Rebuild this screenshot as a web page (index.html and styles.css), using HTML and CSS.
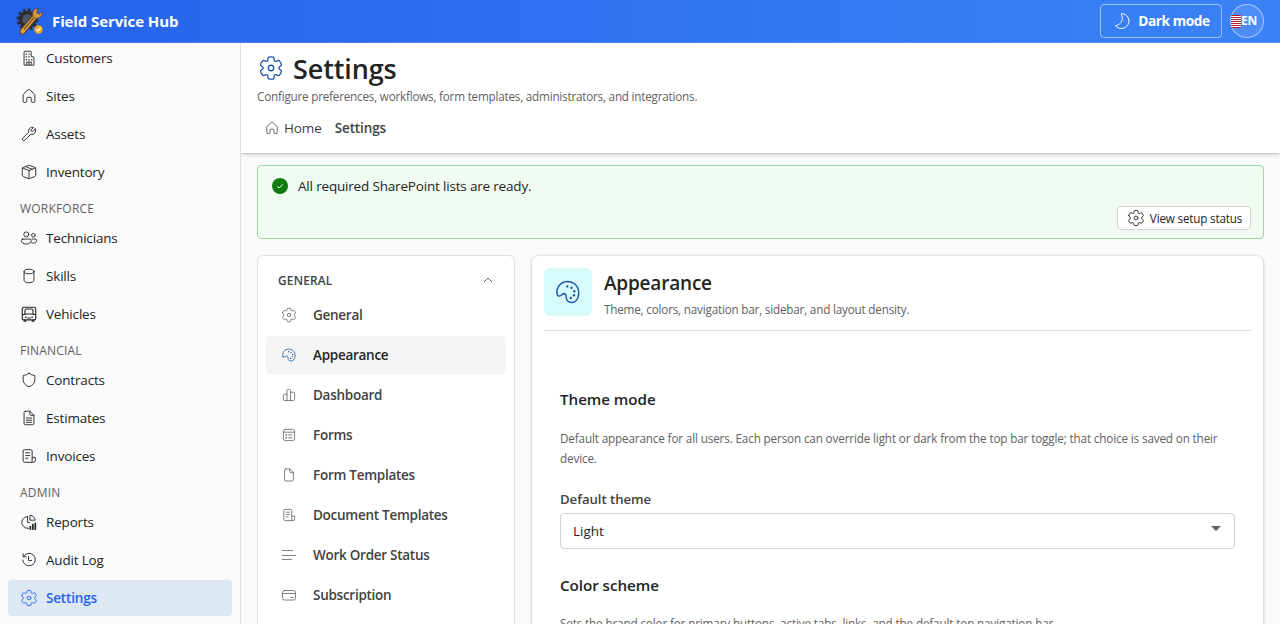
FILE: index.html
```html
<!DOCTYPE html>
<html lang="en">
<head>
<meta charset="utf-8">
<title>Field Service Hub</title>
<link rel="stylesheet" href="styles.css">
</head>
<body>
<svg class="defs" aria-hidden="true">
  <symbol id="gear" viewBox="0 0 20 20"><path d="M1.91 7.38A8.5 8.5 0 0 1 3.69 4.3a.5.5 0 0 1 .54-.13l1.92.68a1 1 0 0 0 1.32-.76l.36-2a.5.5 0 0 1 .4-.4 8.53 8.53 0 0 1 3.55 0c.2.04.35.2.38.4l.37 2a1 1 0 0 0 1.32.76l1.92-.68a.5.5 0 0 1 .54.13 8.5 8.5 0 0 1 1.78 3.08c.06.2 0 .4-.15.54l-1.56 1.32a1 1 0 0 0 0 1.52l1.56 1.32a.5.5 0 0 1 .15.54 8.5 8.5 0 0 1-1.78 3.08.5.5 0 0 1-.54.13l-1.92-.68a1 1 0 0 0-1.32.76l-.37 2a.5.5 0 0 1-.38.4 8.53 8.53 0 0 1-3.56 0 .5.5 0 0 1-.39-.4l-.36-2a1 1 0 0 0-1.32-.76l-1.92.68a.5.5 0 0 1-.54-.13 8.5 8.5 0 0 1-1.78-3.08.5.5 0 0 1 .15-.54l1.56-1.32a1 1 0 0 0 0-1.52L2.06 7.92a.5.5 0 0 1-.15-.54Z"/><circle cx="10" cy="10" r="2.1"/></symbol>
  <symbol id="building" viewBox="0 0 20 20"><path d="M4.5 17.5v-14a1 1 0 0 1 1-1h6a1 1 0 0 1 1 1v5h2a1 1 0 0 1 1 1v8zM7.5 17.5v-3h5v3M10 14.5v3"/><path class="solid" d="M6.3 5h1.4v1.4H6.3zM9.3 5h1.4v1.4H9.3zM6.3 8h1.4v1.4H6.3zM9.3 8h1.4v1.4H9.3zM6.3 11h1.4v1.4H6.3zM9.3 11h1.4v1.4H9.3zM12.3 11h1.4v1.4h-1.4z"/></symbol>
  <symbol id="home" viewBox="0 0 20 20"><path d="M9.3 2.9a1 1 0 0 1 1.4 0l5.3 4.9c.3.3.5.7.5 1.1V16a1 1 0 0 1-1 1h-2a1 1 0 0 1-1-1v-3.500a1 1 0 0 0-1-1h-3a1 1 0 0 0-1 1V16a1 1 0 0 1-1 1h-2a1 1 0 0 1-1-1V8.900c0-.4.2-.8.5-1.100z"/></symbol>
  <symbol id="wrench" viewBox="0 0 20 20"><path d="M16.900 4.500 14.200 7.200 12.500 6.900 12.200 5.400 14.900 2.700a4 4 0 0 0-5.100 5.200L3.100 14.600a1.600 1.600 0 0 0 2.300 2.300L12 10.200a4 4 0 0 0 4.900-5.700Z"/></symbol>
  <symbol id="box" viewBox="0 0 20 20"><path d="M9.400 2.700a2 2 0 0 1 1.300 0l5.800 2.200c.6.200 1 .7 1 1.300v7.500c0 .6-.4 1.100-1 1.300l-5.800 2.300a2 2 0 0 1-1.400 0L3.500 15c-.6-.2-1-.7-1-1.300V6.200c0-.6.4-1.100 1-1.300zM2.800 5.500 10 8.400l7.200-2.900M10 8.400v9M6.200 4l7.300 2.900"/></symbol>
  <symbol id="people" viewBox="0 0 20 20"><circle cx="7" cy="6" r="2.800"/><circle cx="14.800" cy="7" r="2"/><path d="M3 11.200h8a1.500 1.500 0 0 1 1.500 1.500c0 2.300-2.200 4-5.500 4s-5.500-1.700-5.500-4A1.500 1.500 0 0 1 3 11.200ZM13.500 11.200h3.600a1.400 1.400 0 0 1 1.400 1.400c0 1.700-1.400 3.100-3.700 3.100-.7 0-1.300-.1-1.800-.3"/></symbol>
  <symbol id="drum" viewBox="0 0 20 20"><ellipse cx="10" cy="5" rx="5.500" ry="2.500"/><path d="M4.500 5v10c0 1.400 2.500 2.500 5.500 2.500s5.500-1.100 5.500-2.500V5"/></symbol>
  <symbol id="bus" viewBox="0 0 20 20"><path d="M4 16.500h12a1.500 1.500 0 0 0 1.500-1.500V4.500a2 2 0 0 0-2-2h-11a2 2 0 0 0-2 2V15A1.500 1.500 0 0 0 4 16.500ZM4.500 16.500v1.500h2v-1.500M13.500 16.500v1.500h2v-1.500M5.500 10V6A1.500 1.500 0 0 1 7 4.500h6A1.500 1.500 0 0 1 14.500 6v4zM2.500 10.500h3M14.500 10.500h3M6 13.500h1M13 13.500h1M8.500 14.500h3" stroke-width="1.250"/></symbol>
  <symbol id="shield" viewBox="0 0 20 20"><path d="M10 2.500c2 1.400 4 2.200 6.500 2.500v4.500c0 3.700-2.200 6.500-6.500 8-4.300-1.500-6.500-4.300-6.500-8V5C6 4.700 8 3.900 10 2.500Z"/></symbol>
  <symbol id="doctext" viewBox="0 0 20 20"><path d="M6 2.500h5l4.500 4.500v9A1.500 1.500 0 0 1 14 17.500H6A1.500 1.500 0 0 1 4.500 16V4A1.500 1.500 0 0 1 6 2.500ZM11 2.500V6a1 1 0 0 0 1 1h3.500M7 10h6M7 12.400h6M7 14.800h6"/></symbol>
  <symbol id="doc" viewBox="0 0 20 20"><path d="M6 2.500h5l4.500 4.500v9A1.500 1.500 0 0 1 14 17.500H6A1.500 1.500 0 0 1 4.500 16V4A1.500 1.500 0 0 1 6 2.500ZM11 2.500V6a1 1 0 0 0 1 1h3.500"/></symbol>
  <symbol id="receipt" viewBox="0 0 20 20"><path d="M13.500 11.500V4.500a1.500 1.500 0 0 0-1.500-1.500H5a1.500 1.500 0 0 0-1.500 1.500V15A2 2 0 0 0 5.500 17h9.500a2 2 0 0 0 2-2v-3.500h-3.500V15a2 2 0 0 1-.6 2M6.300 6.500h4.500M6.300 9.500h4.500M6.300 12.500h2.500"/></symbol>
  <symbol id="report" viewBox="0 0 20 20"><path d="M8.500 4A6.500 6.500 0 0 0 8.500 17M8.500 4v6.500h2M11.500 2.500c3 .3 5 2.500 5.300 5.500h-5.300zM8.500 17h.8"/><path d="M11.500 18v-3M14.300 18v-5M17 18v-6.500" stroke-width="1.900"/></symbol>
  <symbol id="history" viewBox="0 0 20 20"><path d="M3.500 3v3.500H7M3.800 6.200A7 7 0 1 1 3 10M9.500 6v4.500h3.500"/></symbol>
  <symbol id="palette" viewBox="0 0 20 20"><path d="M2.500 12.100C1 8.500 3.500 4 7.500 2.800c4.500-1.200 9.100 1.500 10 6 .8 3.900-.9 8.200-4.500 8.700-2.500.3-4.200-1.400-4.300-3.700 0-1.700-.5-2.700-1.800-2.700-1.300.1-1.500 1.400-2.600 1.700-.8.200-1.500 0-1.800-.7Z"/><g class="solid"><circle cx="9.500" cy="6" r=".85"/><circle cx="12.500" cy="7" r=".85"/><circle cx="14.500" cy="9.500" r=".85"/><circle cx="14.300" cy="12.300" r=".85"/><circle cx="12" cy="14.300" r=".85"/></g></symbol>
  <symbol id="bars" viewBox="0 0 20 20"><path d="M7.500 17V4.500A1.500 1.500 0 0 1 9 3h1.500A1.500 1.500 0 0 1 12 4.500V17M7.500 9H4.500A1.500 1.500 0 0 0 3 10.500V15.500A1.500 1.500 0 0 0 4.500 17h11A1.500 1.500 0 0 0 17 15.500V8A1.500 1.500 0 0 0 15.500 6.500H12"/></symbol>
  <symbol id="form" viewBox="0 0 20 20"><rect x="3" y="3" width="14" height="14" rx="2.500"/><path d="M3 6.500h14M9.500 10H14M9.500 13.500H14"/><path class="solid" d="M5.700 9.200h1.800v1.700H5.700zM5.700 12.600h1.800v1.700H5.700z"/></symbol>
  <symbol id="lines" viewBox="0 0 20 20"><path d="M1.500 4.400h13M1.500 10.600h17M1.500 15.600h12"/></symbol>
  <symbol id="card" viewBox="0 0 20 20"><rect x="1.900" y="4.400" width="16.200" height="11.900" rx="2.500"/><path d="M1.900 8.100h16.200M12.500 13.100h2.500"/></symbol>
  <symbol id="moon" viewBox="0 0 20 20"><path d="M10 2.500a7.500 7.500 0 1 1-6.300 12.300C8 13.500 10.300 10.500 10.300 7.500 10.300 5.500 9.300 4 9.500 2.600Z"/></symbol>
</svg>

<header class="topbar">
  <svg class="logo" viewBox="0 0 28 28">
    <circle cx="11.500" cy="12.500" r="9" fill="none" stroke="#303038" stroke-width="4" stroke-dasharray="2.700 2"/>
    <circle cx="11.500" cy="12.500" r="7" fill="#4a5668" stroke="#2d2c30" stroke-width="3.500"/>
    <path d="M6.500 24.500 19 9.500" stroke="#574026" stroke-width="6" stroke-linecap="round"/>
    <path d="M6.500 24.500 19 9.500" stroke="#dda03e" stroke-width="4.200" stroke-linecap="round"/>
    <path d="M22 1.200c-4.500.5-6.500 4-5 8.300 2 3 7.500 2.500 9.500-3l-.3-1.800-3.200 2.500-2.500-1.500z" fill="#d59b41" stroke="#574026" stroke-width=".8"/>
    <path d="M8 22.500 17.500 11" stroke="#765027" stroke-width="1.200"/>
    <circle cx="22.500" cy="22.500" r="4.200" fill="#f5a623"/>
    <path d="m20.500 22.500 1.500 1.500 2.700-3" fill="none" stroke="#fff" stroke-width="1.200"/>
  </svg>
  <span class="brand">Field Service Hub</span>
  <button class="mode"><svg class="icon"><use href="#moon"/></svg><span>Dark mode</span></button>
  <div class="lang"><span class="flag"></span><span>EN</span></div>
</header>

<div class="shell">
  <nav class="sidebar">
    <a class="nav"><svg class="icon"><use href="#building"/></svg>Customers</a>
    <a class="nav"><svg class="icon"><use href="#home"/></svg>Sites</a>
    <a class="nav"><svg class="icon"><use href="#wrench"/></svg>Assets</a>
    <a class="nav"><svg class="icon"><use href="#box"/></svg>Inventory</a>
    <div class="group">WORKFORCE</div>
    <a class="nav"><svg class="icon"><use href="#people"/></svg>Technicians</a>
    <a class="nav"><svg class="icon"><use href="#drum"/></svg>Skills</a>
    <a class="nav"><svg class="icon"><use href="#bus"/></svg>Vehicles</a>
    <div class="group">FINANCIAL</div>
    <a class="nav"><svg class="icon"><use href="#shield"/></svg>Contracts</a>
    <a class="nav"><svg class="icon"><use href="#doctext"/></svg>Estimates</a>
    <a class="nav"><svg class="icon"><use href="#receipt"/></svg>Invoices</a>
    <div class="group">ADMIN</div>
    <a class="nav"><svg class="icon"><use href="#report"/></svg>Reports</a>
    <a class="nav"><svg class="icon"><use href="#history"/></svg>Audit Log</a>
    <a class="nav current"><svg class="icon"><use href="#gear"/></svg>Settings</a>
  </nav>

  <main class="main">
    <section class="pagehead">
      <div class="titlerow"><svg class="icon"><use href="#gear"/></svg><h1>Settings</h1></div>
      <p class="subtitle">Configure preferences, workflows, form templates, administrators, and integrations.</p>
      <div class="crumbs"><svg class="icon"><use href="#home"/></svg><span>Home</span><b>Settings</b></div>
    </section>

    <section class="alert">
      <div class="message">
        <svg class="check" viewBox="0 0 16 16"><circle cx="8" cy="8" r="8"/><path d="m5.300 8.200 1.800 1.800 3.700-3.700"/></svg>
        <span>All required SharePoint lists are ready.</span>
      </div>
      <button class="setup"><svg class="icon"><use href="#gear"/></svg><span>View setup status</span></button>
    </section>

    <div class="columns">
      <aside class="menu">
        <div class="menuhead"><span>GENERAL</span><svg class="chevron" viewBox="0 0 10 6"><path d="m1 5 4-4 4 4"/></svg></div>
        <a class="entry"><svg class="icon"><use href="#gear"/></svg>General</a>
        <a class="entry selected"><svg class="icon"><use href="#palette"/></svg>Appearance</a>
        <a class="entry"><svg class="icon"><use href="#bars"/></svg>Dashboard</a>
        <a class="entry"><svg class="icon"><use href="#form"/></svg>Forms</a>
        <a class="entry"><svg class="icon"><use href="#doc"/></svg>Form Templates</a>
        <a class="entry"><svg class="icon"><use href="#receipt"/></svg>Document Templates</a>
        <a class="entry"><svg class="icon"><use href="#lines"/></svg>Work Order Status</a>
        <a class="entry"><svg class="icon"><use href="#card"/></svg>Subscription</a>
      </aside>

      <section class="panel">
        <div class="panelhead">
          <div class="badge"><svg class="icon"><use href="#palette"/></svg></div>
          <div><h2>Appearance</h2><p class="summary">Theme, colors, navigation bar, sidebar, and layout density.</p></div>
        </div>
        <div class="panelbody">
          <h3>Theme mode</h3>
          <p class="help">Default appearance for all users. Each person can override light or dark from the top bar toggle; that choice is saved on their device.</p>
          <label class="label">Default theme</label>
          <div class="select"><span>Light</span><i class="caret"></i></div>
          <h3>Color scheme</h3>
          <p class="help scheme">Sets the brand color for primary buttons, active tabs, links, and the default top navigation bar.</p>
        </div>
      </section>
    </div>
  </main>
</div>
</body>
</html>
```
FILE: styles.css
```css
* { box-sizing: border-box; }
body { margin: 0; height: 624px; overflow: hidden; display: flex; flex-direction: column; background: #fafafa; color: #242424; font: 13.500px/20px "Open Sans", "Noto Sans", sans-serif; letter-spacing: -.18px; }
h1, h2, h3, p { margin: 0; font-weight: 600; }
p { font-weight: 400; }
button { font: inherit; letter-spacing: inherit; margin: 0; }
.defs { display: none; }
.icon { width: 20px; height: 20px; flex: none; fill: none; stroke: currentColor; stroke-width: 1; stroke-linejoin: round; stroke-linecap: round; }
.solid { fill: currentColor; stroke: none; }

.topbar { height: 43px; flex: none; display: flex; align-items: center; padding: 0 16px; background: linear-gradient(90deg, #2563eb, #3b82f6); border-bottom: 1px solid rgba(255, 255, 255, .15); color: #fff; }
.logo { width: 28px; height: 28px; margin-right: 8px; }
.brand { font-size: 15px; font-weight: 700; letter-spacing: -.1px; }
.mode { margin-left: auto; width: 122px; height: 34px; display: flex; align-items: center; justify-content: center; gap: 6px; padding: 0; border: 1px solid rgba(255, 255, 255, .5); border-radius: 4px; background: none; color: #fff; font-size: 13.700px; font-weight: 700; letter-spacing: -.42px; }
.lang { width: 34px; height: 34px; margin-left: 8px; display: flex; align-items: center; border: 1px solid rgba(255, 255, 255, .5); border-radius: 50%; background: rgba(255, 255, 255, .1); font-size: 12px; font-weight: 700; letter-spacing: -.3px; }
.flag { width: 10px; height: 13px; flex: none; background: repeating-linear-gradient(#b22234 0 1px, #fff 1px 2px); border-radius: 1px; }

.shell { flex: 1; min-height: 0; display: flex; }
.sidebar { width: 241px; flex: none; overflow: hidden; padding: 0 8px; border-right: 1px solid #e0e0e0; }
.nav { display: flex; align-items: center; gap: 7px; height: 36px; margin-bottom: 2px; padding-left: 11px; border-radius: 4px; }
.nav:first-child { margin-top: -3px; }
.nav .icon { width: 20px; height: 20px; padding: 1px; }
.current { background: #dce9f5; color: #2563eb; font-weight: 600; }
.group { height: 28px; padding: 7px 12px 0; font-size: 12px; letter-spacing: .2px; color: #616161; }

.main { flex: 1; min-width: 0; overflow: hidden; }
.pagehead { height: 110px; padding: 8px 16px 0; background: #fff; box-shadow: 0 0 2px rgba(0, 0, 0, .24), 0 2px 4px rgba(0, 0, 0, .14); }
.titlerow { display: flex; align-items: center; gap: 8px; height: 36px; }
.titlerow .icon { width: 28px; height: 28px; padding: 1px; color: #1e55a8; margin-top: -2px; }
h1 { font-size: 27px; line-height: 36px; letter-spacing: -.12px; }
.subtitle, .summary, .help { font-size: 11.700px; letter-spacing: -.21px; color: #616161; }
.subtitle { line-height: 18px; }
.crumbs { display: flex; align-items: center; margin-top: 13px; padding-left: 7px; color: #424242; letter-spacing: -.12px; }
.crumbs .icon { width: 16px; height: 16px; margin-right: 4px; }
.crumbs b { margin-left: 13px; font-weight: 600; }

.alert { height: 74px; margin: 12px 16px 16px; padding: 10px 12px 8px 14px; display: flex; flex-direction: column; justify-content: space-between; border: 1px solid #9fd89f; border-radius: 4px; background: #f1faf1; }
.message { display: flex; align-items: center; gap: 10px; }
.check { width: 16px; height: 16px; fill: #107c10; }
.check path { fill: none; stroke: #fff; }
.setup { align-self: flex-end; width: 134px; height: 24px; display: flex; align-items: center; justify-content: center; gap: 4px; padding: 0; border: 1px solid #d1d1d1; border-radius: 4px; background: #fff; color: #242424; font-size: 11.700px; line-height: 22px; }
.setup .icon { padding: 1px; }

.columns { display: flex; align-items: flex-start; gap: 16px; padding: 0 16px; }
.menu { width: 258px; height: 420px; flex: none; padding: 8px; border: 1px solid #e0e0e0; border-radius: 6px; background: #fff; }
.menuhead { display: flex; align-items: center; justify-content: space-between; height: 32px; padding: 0 13px 0 12px; font-size: 11.900px; letter-spacing: .2px; font-weight: 600; color: #424242; }
.chevron { width: 10px; height: 6px; fill: none; stroke: #616161; stroke-width: 1; }
.entry { display: flex; align-items: center; gap: 16px; height: 38px; margin-bottom: 2px; padding-left: 15px; border-radius: 4px; color: #424242; font-weight: 600; letter-spacing: -.27px; }
.entry .icon { width: 16px; height: 16px; color: #616161; }
.selected { color: #242424; background: #f5f5f5; }
.entry.selected .icon { color: #1e55a8; }

.panel { flex: 1; min-width: 0; height: 420px; padding: 12px; margin: 1px 1px 0; border-radius: 6px; background: #fff; box-shadow: 0 0 2px rgba(0, 0, 0, .24), 0 2px 4px rgba(0, 0, 0, .14); }
.panelhead { display: flex; gap: 12px; height: 63px; border-bottom: 1px solid #e0e0e0; }
.badge { width: 48px; height: 48px; display: grid; place-items: center; border-radius: 6px; background: #d7fafd; color: #1e55a8; }
.badge .icon { width: 28px; height: 28px; }
h2 { font-size: 19px; line-height: 30px; letter-spacing: -.2px; }
.summary { padding-top: 1px; letter-spacing: -.19px; }
.panelbody { padding: 57px 16px 0; }
h3 { font-size: 15.200px; line-height: 22px; letter-spacing: -.05px; }
.help { margin-top: 18px; letter-spacing: -.14px; }
.label { display: block; margin-top: 21px; font-weight: 600; color: #424242; font-size: 13.200px; letter-spacing: -.05px; }
.select { display: flex; align-items: center; justify-content: space-between; height: 36px; margin: 4px 0 25px; padding: 0 13px 0 12px; border: 1px solid #d1d1d1; border-radius: 4px; letter-spacing: -.02px; }
.scheme { margin-top: 17px; }
.caret { border: 5px solid transparent; border-top-color: #616161; border-bottom: 0; margin-top: -5px; }
```
